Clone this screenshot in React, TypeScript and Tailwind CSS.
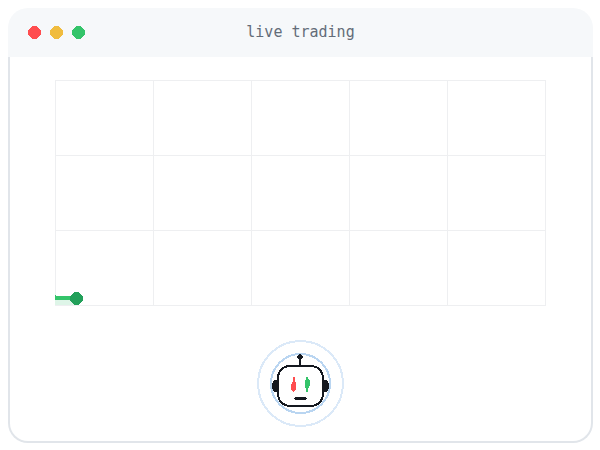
const windowDots: { name: string; color: string }[] = [
  { name: "close", color: "#ff4d4f" },
  { name: "minimize", color: "#f0bc3e" },
  { name: "maximize", color: "#34c46a" },
];

const columns = [0, 98, 196, 294, 392, 490];
const rows = [0, 75, 150, 225];

const WindowDot = ({ color }: { color: string }) => (
  <svg
    viewBox="0 0 13 13"
    className="size-[13px]"
    shapeRendering="crispEdges"
    aria-hidden="true"
  >
    <path d="M4 0h5v1h1v1h1v1h1v1h1v5h-1v1h-1v1h-1v1H9v1H4v-1H3v-1H2v-1H1V9H0V4h1V3h1V2h1V1h1z" fill={color} />
  </svg>
);

const PriceChart = () => (
  <svg
    viewBox="0 0 491 226"
    className="block w-full"
    shapeRendering="crispEdges"
    role="img"
    aria-label="Price chart"
  >
    {columns.map((x) => (
      <rect key={x} x={x} y="0" width="1" height="226" fill="#eeeff1" />
    ))}
    {rows.map((y) => (
      <rect key={y} x="0" y={y} width="491" height="1" fill="#eeeff1" />
    ))}
    {/* area and line up to the latest price */}
    <rect x="0" y="218" width="21" height="7" fill="#def5e8" />
    <path d="M0 215h1v1h20v4H0z" fill="#34c46a" />
    <path d="M19 212h5v1h1v1h1v1h1v1h1v5h-1v1h-1v1h-1v1h-1v1h-5v-1h-1v-1h-1v-1h-1v-1h-1v-5h1v-1h1v-1h1v-1h1z" fill="#22a05a" />
  </svg>
);

const Robot = () => (
  <svg
    viewBox="7 5 87 87"
    className="size-[87px]"
    shapeRendering="crispEdges"
    fill="none"
    role="img"
    aria-label="Trading robot"
  >
    <circle cx="50.5" cy="48.5" r="42.5" stroke="#dbe9f8" strokeWidth="2" />
    <circle cx="50.5" cy="48.5" r="29.5" stroke="#b9d5f1" strokeWidth="2" />
    {/* ears */}
    <path d="M24 45h5v12h-5v-1h-1v-2h-1v-6h1v-2h1z" fill="#14181f" />
    <path d="M77 45h-5v12h5v-1h1v-2h1v-6h-1v-2h-1z" fill="#14181f" />
    <rect
      x="28"
      y="31"
      width="45"
      height="40"
      rx="12"
      fill="#ffffff"
      stroke="#14181f"
      strokeWidth="2"
    />
    {/* antenna */}
    <rect x="49" y="22" width="2" height="8" fill="#14181f" />
    <path d="M49 19h2v1h1v1h1v2h-1v1h-1v1h-2v-1h-1v-1h-1v-2h1v-1h1z" fill="#14181f" />
    {/* candlestick eyes */}
    <path d="M43 42h2v5h1v8h-1v1h-1v1h-1v-1h-1v-1h-1v-6h1v-2h1z" fill="#ff4d4f" />
    <path d="M56 42h2v2h1v1h1v6h-1v2h-1v4h-2v-4h-1v-8h1z" fill="#34c46a" />
    <path d="M45 62h11v1h1v1h-1v1H45v-1h-1v-1h1z" fill="#14181f" />
  </svg>
);

const App = () => {
  return (
    <main className="bg-white py-2 pl-2 pr-[7px]">
      <section>
        <header className="grid grid-cols-[1fr_auto_1fr] items-center rounded-t-[20px] bg-[#f6f8fa] px-5 h-[49px]">
          <div className="flex gap-[9px]">
            {windowDots.map((dot) => (
              <WindowDot key={dot.name} color={dot.color} />
            ))}
          </div>
          <h1 className="[font-family:'DejaVu_Sans_Mono',monospace] text-[15px] leading-[19px] text-[#636c78]">
            live trading
          </h1>
        </header>
        <div className="flex flex-col items-center rounded-b-[20px] border-2 border-t-0 border-[#e1e5ea] px-[45px] pt-[23px] pb-[14px]">
          <PriceChart />
          <div className="mt-[34px]">
            <Robot />
          </div>
        </div>
      </section>
    </main>
  );
};

export default App;
